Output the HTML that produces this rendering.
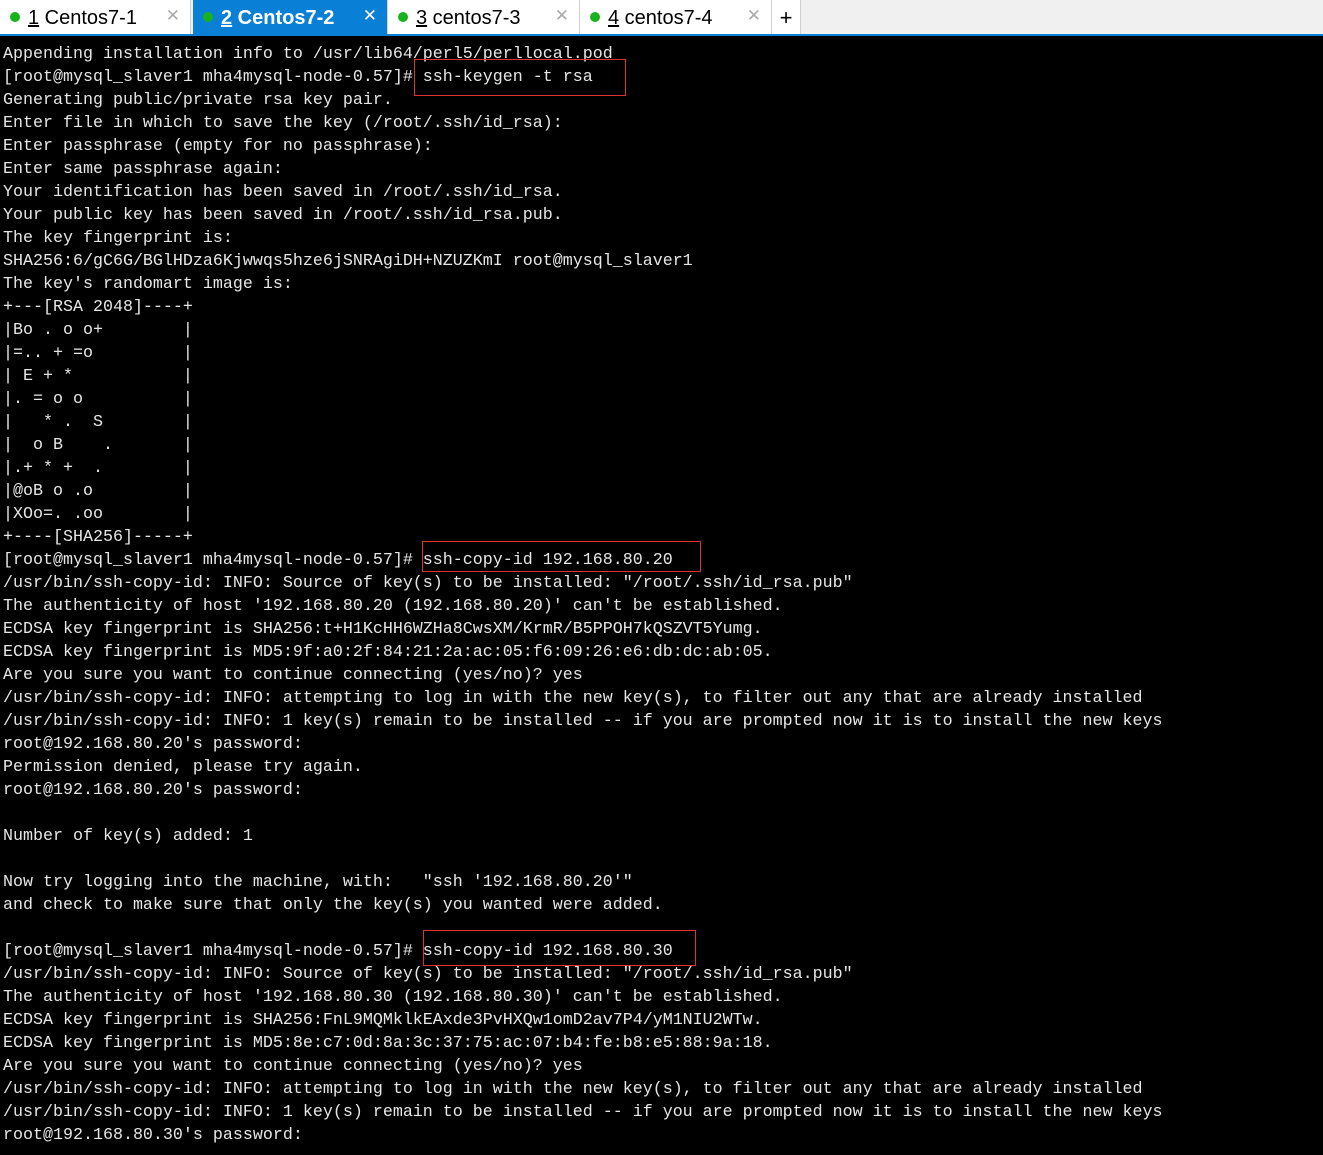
<!DOCTYPE html>
<html><head><meta charset="utf-8"><style>
body{margin:0;width:1323px;height:1155px;background:#000;overflow:hidden;position:relative;font-family:"Liberation Sans",sans-serif}
.bar{position:absolute;left:0;top:0;width:1323px;height:34px;background:#f0f0f0;border-bottom:2px solid #0a7fd6}
.tab{position:absolute;top:0;height:34px;background:#fff;border-right:1px solid #d0d0d0;font-size:20px;color:#000;line-height:36px}
.tab .dot{position:absolute;left:10px;top:12px;width:10px;height:10px;border-radius:50%;background:#17b21c}
.tab .lbl{position:absolute;left:28px;top:0}
.tab .x{position:absolute;right:10px;top:-2px;color:#aaa;font-size:17px}
.tab.act{background:#0a7fd6;color:#fff;font-weight:bold}
.tab.act .x{color:#fff;font-weight:normal}
pre{position:absolute;left:3px;top:43px;margin:0;font-family:"Liberation Mono",monospace;font-size:16.67px;line-height:23px;color:#e6e6e6}
.box{position:absolute;border:1px solid #e03030}
</style></head><body>
<div class="bar">
<div class="tab" style="left:0;width:190px"><span class="dot"></span><span class="lbl"><u>1</u> Centos7-1</span><span class="x">✕</span></div>
<div class="tab act" style="left:193px;width:194px"><span class="dot"></span><span class="lbl"><u>2</u> Centos7-2</span><span class="x">✕</span></div>
<div class="tab" style="left:388px;width:191px"><span class="dot"></span><span class="lbl"><u>3</u> centos7-3</span><span class="x">✕</span></div>
<div class="tab" style="left:580px;width:191px"><span class="dot"></span><span class="lbl"><u>4</u> centos7-4</span><span class="x">✕</span></div>
<div class="tab" style="left:772px;width:28px;text-align:center;font-size:22px">+</div>
</div>
<pre>Appending installation info to /usr/lib64/perl5/perllocal.pod
[root@mysql_slaver1 mha4mysql-node-0.57]# ssh-keygen -t rsa
Generating public/private rsa key pair.
Enter file in which to save the key (/root/.ssh/id_rsa):
Enter passphrase (empty for no passphrase):
Enter same passphrase again:
Your identification has been saved in /root/.ssh/id_rsa.
Your public key has been saved in /root/.ssh/id_rsa.pub.
The key fingerprint is:
SHA256:6/gC6G/BGlHDza6Kjwwqs5hze6jSNRAgiDH+NZUZKmI root@mysql_slaver1
The key's randomart image is:
+---[RSA 2048]----+
|Bo . o o+        |
|=.. + =o         |
| E + *           |
|. = o o          |
|   * .  S        |
|  o B    .       |
|.+ * +  .        |
|@oB o .o         |
|XOo=. .oo        |
+----[SHA256]-----+
[root@mysql_slaver1 mha4mysql-node-0.57]# ssh-copy-id 192.168.80.20
/usr/bin/ssh-copy-id: INFO: Source of key(s) to be installed: "/root/.ssh/id_rsa.pub"
The authenticity of host '192.168.80.20 (192.168.80.20)' can't be established.
ECDSA key fingerprint is SHA256:t+H1KcHH6WZHa8CwsXM/KrmR/B5PPOH7kQSZVT5Yumg.
ECDSA key fingerprint is MD5:9f:a0:2f:84:21:2a:ac:05:f6:09:26:e6:db:dc:ab:05.
Are you sure you want to continue connecting (yes/no)? yes
/usr/bin/ssh-copy-id: INFO: attempting to log in with the new key(s), to filter out any that are already installed
/usr/bin/ssh-copy-id: INFO: 1 key(s) remain to be installed -- if you are prompted now it is to install the new keys
root@192.168.80.20's password:
Permission denied, please try again.
root@192.168.80.20's password:

Number of key(s) added: 1

Now try logging into the machine, with:   "ssh '192.168.80.20'"
and check to make sure that only the key(s) you wanted were added.

[root@mysql_slaver1 mha4mysql-node-0.57]# ssh-copy-id 192.168.80.30
/usr/bin/ssh-copy-id: INFO: Source of key(s) to be installed: "/root/.ssh/id_rsa.pub"
The authenticity of host '192.168.80.30 (192.168.80.30)' can't be established.
ECDSA key fingerprint is SHA256:FnL9MQMklkEAxde3PvHXQw1omD2av7P4/yM1NIU2WTw.
ECDSA key fingerprint is MD5:8e:c7:0d:8a:3c:37:75:ac:07:b4:fe:b8:e5:88:9a:18.
Are you sure you want to continue connecting (yes/no)? yes
/usr/bin/ssh-copy-id: INFO: attempting to log in with the new key(s), to filter out any that are already installed
/usr/bin/ssh-copy-id: INFO: 1 key(s) remain to be installed -- if you are prompted now it is to install the new keys
root@192.168.80.30's password:</pre>
<div class="box" style="left:414px;top:59px;width:210px;height:35px"></div>
<div class="box" style="left:422px;top:541px;width:277px;height:29px"></div>
<div class="box" style="left:423px;top:930px;width:271px;height:34px"></div>
</body></html>
